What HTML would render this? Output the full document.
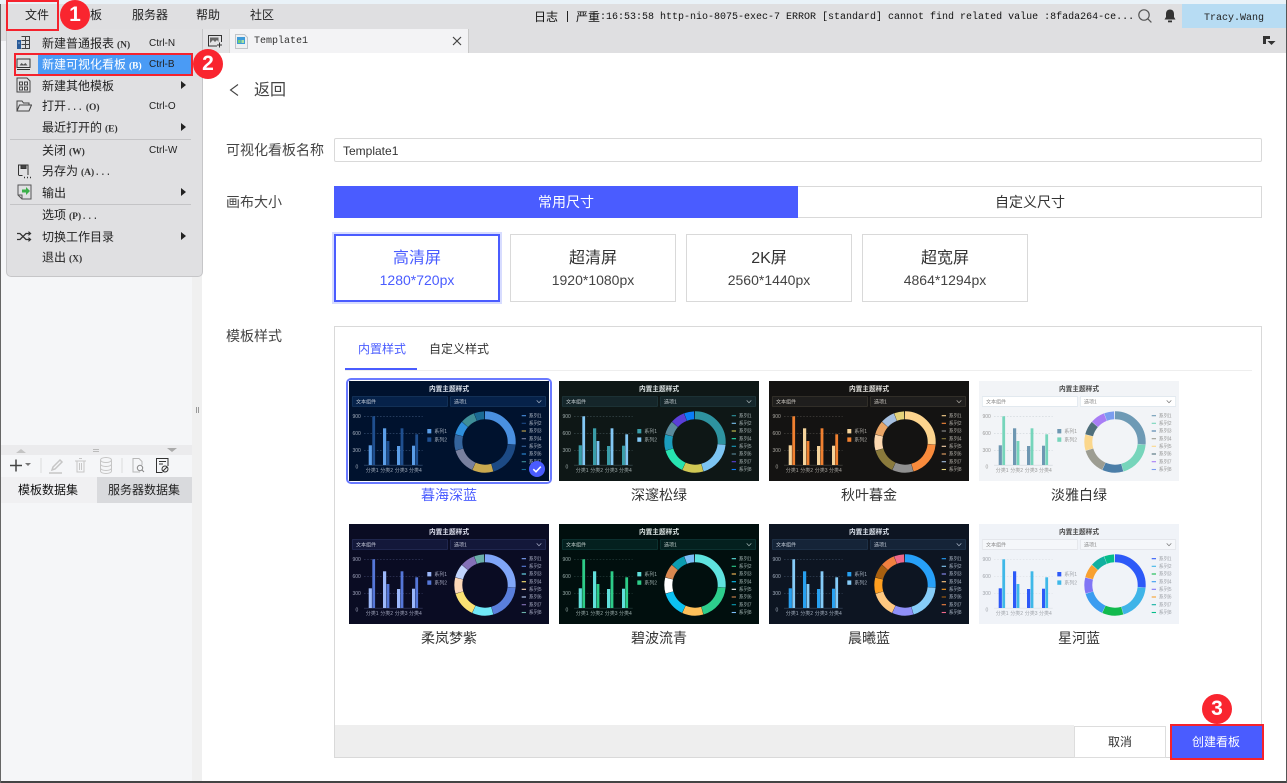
<!DOCTYPE html>
<html lang="zh-CN"><head><meta charset="utf-8"><title>新建可视化看板</title>
<style>
*{box-sizing:border-box}
html,body{margin:0;padding:0;width:1287px;height:783px;overflow:hidden;background:#fff}
body{position:relative;font-family:"Liberation Sans","Noto Sans CJK SC",sans-serif;color:#333;font-size:12px}
.a{position:absolute}
.t{position:absolute;white-space:nowrap;transform:translateY(-50%);line-height:1}
.c{transform:translate(-50%,-50%);text-align:center}
.m{font-family:"Liberation Mono","Noto Sans CJK SC",monospace;font-size:10px}
.k{font-family:"Liberation Serif",serif;font-size:9.5px;color:#333;margin-left:3px;font-weight:700}
.d{font-family:"Liberation Mono",monospace;font-size:10px;color:#333;letter-spacing:-.4px}
.mi{font-size:12px;color:#222;left:42px}
.ctl{font-size:10px;color:#222;left:149px}
.arr{position:absolute;left:181px;width:0;height:0;border-left:5px solid #222;border-top:4px solid transparent;border-bottom:4px solid transparent}
.sep{position:absolute;left:10px;width:181px;height:1px;background:#c4c4c6}
.red{position:absolute;border:2px solid #f5222d}
.num{position:absolute;width:30px;height:30px;border-radius:50%;background:#f9252f;color:#fff;font-size:21px;font-weight:700;line-height:30px;text-align:center}
.card{position:absolute;top:234px;width:166px;height:68px;border:1px solid #d9d9d9;background:#fff}
.card b{position:absolute;left:0;right:0;top:15px;text-align:center;font-weight:400;font-size:16px;line-height:18px;color:#333}
.card i{position:absolute;left:0;right:0;top:37px;text-align:center;font-style:normal;font-size:14px;line-height:16px;color:#444}
.th{position:absolute;width:200px;height:100px;display:block}
.tt{font-size:6.7px;text-anchor:middle;font-weight:700}
.s{font-size:5px}
.name{font-size:14px;color:#333}
</style></head><body>
<svg width="0" height="0" style="position:absolute"><defs>
<symbol id="c" viewBox="0 0 200 100" width="200" height="100">
<rect width="200" height="100" style="fill:var(--bg)"/>
<rect x="3.300" y="15.500" width="95.300" height="10" rx=".6" style="fill:var(--in);stroke:var(--bd)" stroke-width=".7"/>
<rect x="101.300" y="15.500" width="95.400" height="10" rx=".6" style="fill:var(--in);stroke:var(--bd)" stroke-width=".7"/>
<path d="M187.700 19.400l2.300 2.400 2.300-2.400" fill="none" style="stroke:var(--tx)" stroke-width=".7"/>
<g style="stroke:var(--gr)" stroke-width=".6" stroke-dasharray="1.600 1.600"><path d="M15 35.300H73.700M15 52.300H73.700M15 69.300H73.700"/></g>
<path d="M15 84.200H73.700" style="stroke:var(--gr)" stroke-width=".6"/>
<g style="fill:var(--a)"><rect x="19.700" y="64.300" width="3.200" height="19.700"/><rect x="34" y="47.300" width="3.200" height="36.700"/><rect x="48" y="65" width="3.200" height="19"/><rect x="63" y="64.700" width="3" height="19.300"/><rect x="78.300" y="48" width="4" height="4.400"/></g>
<g style="fill:var(--b)"><rect x="23.300" y="35.300" width="2.800" height="48.700"/><rect x="37.600" y="60" width="2.800" height="24"/><rect x="51.600" y="47.300" width="2.800" height="36.700"/><rect x="66.300" y="53.300" width="2.800" height="30.700"/><rect x="78.300" y="56.400" width="4" height="4.400"/></g>
<g fill="none" stroke-width="8" transform="rotate(-90 136 61)">
<circle cx="136" cy="61" r="26.700" pathLength="360" stroke-dasharray="95.400 360" stroke-dashoffset="0" style="stroke:var(--c1)"/>
<circle cx="136" cy="61" r="26.700" pathLength="360" stroke-dasharray="68.400 360" stroke-dashoffset="-96" style="stroke:var(--c2)"/>
<circle cx="136" cy="61" r="26.700" pathLength="360" stroke-dasharray="40.400 360" stroke-dashoffset="-165" style="stroke:var(--c3)"/>
<circle cx="136" cy="61" r="26.700" pathLength="360" stroke-dasharray="48.400 360" stroke-dashoffset="-206" style="stroke:var(--c4)"/>
<circle cx="136" cy="61" r="26.700" pathLength="360" stroke-dasharray="30.400 360" stroke-dashoffset="-255" style="stroke:var(--c5)"/>
<circle cx="136" cy="61" r="26.700" pathLength="360" stroke-dasharray="26.400 360" stroke-dashoffset="-286" style="stroke:var(--c6)"/>
<circle cx="136" cy="61" r="26.700" pathLength="360" stroke-dasharray="27.400 360" stroke-dashoffset="-313" style="stroke:var(--c7)"/>
<circle cx="136" cy="61" r="26.700" pathLength="360" stroke-dasharray="19 360" stroke-dashoffset="-341" style="stroke:var(--c8)"/>
</g>
<g stroke-width="1.100"><path d="M172.700 34.700h4.300" style="stroke:var(--c1)"/><path d="M172.700 42.300h4.300" style="stroke:var(--c2)"/><path d="M172.700 50h4.300" style="stroke:var(--c3)"/><path d="M172.700 57.700h4.300" style="stroke:var(--c4)"/><path d="M172.700 65.300h4.300" style="stroke:var(--c5)"/><path d="M172.700 73h4.300" style="stroke:var(--c6)"/><path d="M172.700 80.700h4.300" style="stroke:var(--c7)"/><path d="M172.700 88.500h4.300" style="stroke:var(--c8)"/></g>
</symbol>
</defs></svg>

<!-- window chrome -->
<div class="a" style="left:0;top:0;width:1287px;height:4px;background:#e9f2f8"></div>
<div class="a" style="left:0;top:4px;width:1287px;height:49px;background:#dfdfe1"></div>
<div class="a" style="left:0;top:41px;width:192px;height:740px;background:#f5f6f8"></div>
<div class="a" style="left:192px;top:41px;width:10px;height:740px;background:#f0f0f0"></div>
<div class="a" style="left:202px;top:29px;width:27px;height:24px;background:#e3e3e5"></div>
<div class="a" style="left:202px;top:29px;width:1px;height:24px;background:#c8c8c8"></div>
<div class="a" style="left:196px;top:407px;width:1px;height:6px;background:#999"></div>
<div class="a" style="left:198px;top:407px;width:1px;height:6px;background:#999"></div>

<!-- top menu -->
<span class="t c" style="left:37px;top:15px;color:#222">文件</span>
<span class="t" style="left:90px;top:15px;color:#222">板</span>
<span class="t" style="left:132px;top:15px;color:#222">服务器</span>
<span class="t" style="left:196px;top:15px;color:#222">帮助</span>
<span class="t" style="left:250px;top:15px;color:#222">社区</span>
<span class="t" style="left:534px;top:17px;color:#111">日志</span>
<div class="a" style="left:567px;top:11px;width:1px;height:11px;background:#222"></div>
<span class="t" style="left:576px;top:17px;color:#111">严重</span>
<span class="t m" style="left:600px;top:18px;color:#111">:16:53:58 http-nio-8075-exec-7 ERROR [standard] cannot find related value :8fada264-ce...</span>
<svg class="a" style="left:1137px;top:8px" width="16" height="16" viewBox="0 0 16 16" fill="none" stroke="#555" stroke-width="1.200"><circle cx="7" cy="7" r="5.200"/><path d="M10.800 10.800l3.600 3.600"/></svg>
<svg class="a" style="left:1163px;top:8px" width="14" height="16" viewBox="0 0 14 16"><path d="M7 1.500c2.800 0 4 2 4 4.500v3l1.500 2.500h-11L3 9V6c0-2.500 1.200-4.500 4-4.500z" fill="#333"/><rect x="5" y="12.500" width="4" height="1.800" fill="#333"/></svg>
<div class="a" style="left:1182px;top:4px;width:105px;height:24px;background:#b7dcf3"></div>
<span class="t c m" style="left:1234px;top:19px;color:#222">Tracy.Wang</span>

<!-- tab row -->
<svg class="a" style="left:207px;top:33px" width="16" height="16" viewBox="0 0 16 16" fill="none" stroke="#333"><path d="M10 13H1.500V2.500h13V9"/><path d="M3 10l3-3 2 2 2-2 1.500 2V4.500H3z" fill="#666" stroke="none"/><path d="M12.500 9.500v5M10 12h5"/></svg>
<div class="a" style="left:229px;top:29px;width:240px;height:24px;background:#f3f3f5;border-right:1px solid #c8c8c8;border-left:1px solid #d6d6d6"></div>
<svg class="a" style="left:235px;top:34px" width="13" height="15" viewBox="0 0 13 15"><path d="M.5.500h9l3 3v11H.5z" fill="#eef0f2" stroke="#c0c4c8"/><rect x="2" y="3" width="8" height="7" fill="#3f9bd8"/><rect x="3" y="6" width="2.500" height="3" fill="#7bd06f"/><rect x="6.500" y="6" width="2.500" height="3" fill="#a9e29f"/></svg>
<span class="t m" style="left:254px;top:42px;color:#333">Template1</span>
<svg class="a" style="left:452px;top:36px" width="10" height="10" viewBox="0 0 10 10" stroke="#444" stroke-width="1.200"><path d="M1 1l8 8M9 1l-8 8"/></svg>
<svg class="a" style="left:1262px;top:36px" width="14" height="10" viewBox="0 0 14 10"><path d="M1 0h7v3H4v5H1z" fill="#333"/><path d="M5.500 5h8l-4 4z" fill="#333"/></svg>

<!-- left bottom panel -->
<div class="a" style="left:0;top:445px;width:192px;height:10px;background:#ebebed"></div>
<div class="a" style="left:16px;top:449px;border-left:5px solid transparent;border-right:5px solid transparent;border-bottom:4px solid #c4c4c4"></div>
<div class="a" style="left:167px;top:448px;border-left:5px solid transparent;border-right:5px solid transparent;border-top:4px solid #aaa"></div>
<div class="a" style="left:93px;top:449px;width:6px;height:1px;background:#bbb"></div>
<div class="a" style="left:93px;top:451px;width:6px;height:1px;background:#bbb"></div>
<svg class="a" style="left:0;top:455px" width="192" height="22" viewBox="0 0 192 22" fill="none">
<path d="M10 10.500h12M16 4.500v12" stroke="#444" stroke-width="1.500"/><path d="M25 8h6l-3 3z" fill="#777"/>
<path d="M41 3v15M122 3v15" stroke="#dcdcdc"/>
<path d="M52 15l1-3 7-7 2 2-7 7zM49 18h13" stroke="#c6c6c6" stroke-width="1.500"/>
<path d="M75 6h11M77 6v11h7V6M79 3.500h3M79.500 8v7M81.500 8v7" stroke="#c6c6c6"/>
<ellipse cx="106" cy="5" rx="5.500" ry="2.500" stroke="#c6c6c6"/><path d="M100.500 5v11c0 1.500 2.500 2.500 5.500 2.500s5.500-1 5.500-2.500V5M100.500 9c0 1.500 2.500 2.500 5.500 2.500s5.500-1 5.500-2.500M100.500 13c0 1.500 2.500 2.500 5.500 2.500s5.500-1 5.500-2.500" stroke="#c6c6c6"/>
<path d="M140 17h-7V3.500h6l3 3V10" stroke="#b8b8b8"/><circle cx="140" cy="13" r="2.700" stroke="#888"/><path d="M142 15l2 2" stroke="#888"/>
<path d="M168 11V3.500H156.500V17.500h6" stroke="#333"/><path d="M159 6.500h7M159 9h4" stroke="#333"/><circle cx="165" cy="14" r="3" stroke="#333"/><path d="M163 16l4-4" stroke="#333"/>
</svg>
<div class="a" style="left:0;top:477px;width:97px;height:26px;background:#f0f0f2"></div>
<div class="a" style="left:97px;top:477px;width:95px;height:26px;background:#d9dadd"></div>
<span class="t" style="left:18px;top:490px;color:#111">模板数据集</span>
<span class="t" style="left:108px;top:490px;color:#222">服务器数据集</span>

<!-- main -->
<svg class="a" style="left:228px;top:83px" width="12" height="14" viewBox="0 0 12 14" fill="none" stroke="#444" stroke-width="1.100"><path d="M10 1.500L2.500 7l7.500 5.500"/></svg>
<span class="t" style="left:254px;top:91px;font-size:16px;color:#444">返回</span>
<span class="t" style="left:226px;top:150px;font-size:14px;color:#444">可视化看板名称</span>
<div class="a" style="left:334px;top:138px;width:928px;height:24px;border:1px solid #d9d9d9;border-radius:2px"></div>
<span class="t" style="left:343px;top:151px;font-size:12px;color:#333">Template1</span>
<span class="t" style="left:226px;top:202px;font-size:14px;color:#444">画布大小</span>
<div class="a" style="left:334px;top:186px;width:464px;height:32px;background:#4a5cff"></div>
<div class="a" style="left:798px;top:186px;width:464px;height:32px;border:1px solid #d9d9d9;border-left:0"></div>
<span class="t c" style="left:566px;top:202px;font-size:14px;color:#fff">常用尺寸</span>
<span class="t c" style="left:1030px;top:202px;font-size:14px;color:#333">自定义尺寸</span>

<div class="card" style="left:334px;border:2px solid #4a5cff;box-shadow:0 0 0 2px #d7dcff"><b style="top:14px;color:#4a5cff">高清屏</b><i style="top:36px;color:#4a5cff">1280*720px</i></div>
<div class="card" style="left:510px"><b>超清屏</b><i>1920*1080px</i></div>
<div class="card" style="left:686px"><b>2K屏</b><i>2560*1440px</i></div>
<div class="card" style="left:862px"><b>超宽屏</b><i>4864*1294px</i></div>

<span class="t" style="left:226px;top:336px;font-size:14px;color:#444">模板样式</span>
<div class="a" style="left:334px;top:326px;width:928px;height:432px;border:1px solid #d9d9d9"></div>
<span class="t" style="left:358px;top:349px;color:#4a5cff">内置样式</span>
<span class="t" style="left:429px;top:349px;color:#333">自定义样式</span>
<div class="a" style="left:345px;top:370px;width:907px;height:1px;background:#eee"></div>
<div class="a" style="left:345px;top:368px;width:72px;height:2px;background:#4a5cff"></div>
<div class="a" style="left:346px;top:378px;width:206px;height:106px;border:2px solid #6a7aff;border-radius:5px"></div>

<svg class="th" style="left:349px;top:381px;--bg:#00122e;--in:#06224a;--bd:#17385f;--tx:#a8b4c6;--gr:#3a5478;--a:#5b9ee8;--b:#1f4f8f;--c1:#4a90e0;--c2:#1c4a85;--c3:#c9a94f;--c4:#78809f;--c5:#34649c;--c6:#2e8fdc;--c7:#3e8e98;--c8:#1a6a94" viewBox="0 0 200 100"><use href="#c"/><text x="100" y="10" class="tt" fill="#dfe6f0">内置主题样式</text><text class="s" fill="#a3aebd"><tspan x="7" y="22.500" fill="#c4ccd8">文本组件</tspan><tspan x="105" y="22.500" fill="#c4ccd8">选项1</tspan><tspan x="3.500" y="37">900</tspan><tspan x="3.500" y="54">600</tspan><tspan x="3.500" y="71">300</tspan><tspan x="6.500" y="87.500">0</tspan><tspan x="16.700" y="90.800">分类1</tspan><tspan x="31.300" y="90.800">分类2</tspan><tspan x="45.700" y="90.800">分类3</tspan><tspan x="60" y="90.800">分类4</tspan><tspan x="85.300" y="52">系列1</tspan><tspan x="85.300" y="60.300">系列2</tspan><tspan x="179.700" y="36.500">系列1</tspan><tspan x="179.700" y="44">系列2</tspan><tspan x="179.700" y="51.700">系列3</tspan><tspan x="179.700" y="59.400">系列4</tspan><tspan x="179.700" y="67">系列5</tspan><tspan x="179.700" y="74.700">系列6</tspan><tspan x="179.700" y="82.400">系列7</tspan><tspan x="179.700" y="90.200">系列8</tspan></text></svg>

<svg class="th" style="left:559px;top:381px;--bg:#0e1716;--in:#15262a;--bd:#20383c;--tx:#a8b4b6;--gr:#3e5054;--a:#3a9da8;--b:#83c8f5;--c1:#2e93a0;--c2:#7cc4f2;--c3:#cfc854;--c4:#27e3b0;--c5:#1b9cbd;--c6:#5a8a9c;--c7:#5b3fd8;--c8:#0a7cf8" viewBox="0 0 200 100"><use href="#c"/><text x="100" y="10" class="tt" fill="#dfe6e6">内置主题样式</text><text class="s" fill="#a0acac"><tspan x="7" y="22.500" fill="#c4ccd0">文本组件</tspan><tspan x="105" y="22.500" fill="#c4ccd0">选项1</tspan><tspan x="3.500" y="37">900</tspan><tspan x="3.500" y="54">600</tspan><tspan x="3.500" y="71">300</tspan><tspan x="6.500" y="87.500">0</tspan><tspan x="16.700" y="90.800">分类1</tspan><tspan x="31.300" y="90.800">分类2</tspan><tspan x="45.700" y="90.800">分类3</tspan><tspan x="60" y="90.800">分类4</tspan><tspan x="85.300" y="52">系列1</tspan><tspan x="85.300" y="60.300">系列2</tspan><tspan x="179.700" y="36.500">系列1</tspan><tspan x="179.700" y="44">系列2</tspan><tspan x="179.700" y="51.700">系列3</tspan><tspan x="179.700" y="59.400">系列4</tspan><tspan x="179.700" y="67">系列5</tspan><tspan x="179.700" y="74.700">系列6</tspan><tspan x="179.700" y="82.400">系列7</tspan><tspan x="179.700" y="90.200">系列8</tspan></text></svg>

<svg class="th" style="left:769px;top:381px;--bg:#141312;--in:#1f1e1d;--bd:#3a362e;--tx:#b0aca4;--gr:#4a4844;--a:#f5d49c;--b:#f08030;--c1:#fcd48e;--c2:#f98b3c;--c3:#909090;--c4:#8a7a3c;--c5:#fcd8b0;--c6:#e9a566;--c7:#a6c0e0;--c8:#e4d27a" viewBox="0 0 200 100"><use href="#c"/><text x="100" y="10" class="tt" fill="#e6e4e0">内置主题样式</text><text class="s" fill="#aba8a2"><tspan x="7" y="22.500" fill="#ccc8c2">文本组件</tspan><tspan x="105" y="22.500" fill="#ccc8c2">选项1</tspan><tspan x="3.500" y="37">900</tspan><tspan x="3.500" y="54">600</tspan><tspan x="3.500" y="71">300</tspan><tspan x="6.500" y="87.500">0</tspan><tspan x="16.700" y="90.800">分类1</tspan><tspan x="31.300" y="90.800">分类2</tspan><tspan x="45.700" y="90.800">分类3</tspan><tspan x="60" y="90.800">分类4</tspan><tspan x="85.300" y="52">系列1</tspan><tspan x="85.300" y="60.300">系列2</tspan><tspan x="179.700" y="36.500">系列1</tspan><tspan x="179.700" y="44">系列2</tspan><tspan x="179.700" y="51.700">系列3</tspan><tspan x="179.700" y="59.400">系列4</tspan><tspan x="179.700" y="67">系列5</tspan><tspan x="179.700" y="74.700">系列6</tspan><tspan x="179.700" y="82.400">系列7</tspan><tspan x="179.700" y="90.200">系列8</tspan></text></svg>

<svg class="th" style="left:979px;top:381px;--bg:#f2f4f7;--in:#ffffff;--bd:#dbe4ec;--tx:#777;--gr:#cdd3d9;--a:#6e97b2;--b:#76d5bb;--c1:#6e9ab5;--c2:#77d5bb;--c3:#4c7ea8;--c4:#9d9d92;--c5:#fbd78c;--c6:#4f6f7c;--c7:#a87df5;--c8:#7b9df0" viewBox="0 0 200 100"><use href="#c"/><text x="100" y="10" class="tt" fill="#444">内置主题样式</text><text class="s" fill="#999"><tspan x="7" y="22.500" fill="#888">文本组件</tspan><tspan x="105" y="22.500" fill="#888">选项1</tspan><tspan x="3.500" y="37">900</tspan><tspan x="3.500" y="54">600</tspan><tspan x="3.500" y="71">300</tspan><tspan x="6.500" y="87.500">0</tspan><tspan x="16.700" y="90.800">分类1</tspan><tspan x="31.300" y="90.800">分类2</tspan><tspan x="45.700" y="90.800">分类3</tspan><tspan x="60" y="90.800">分类4</tspan><tspan x="85.300" y="52">系列1</tspan><tspan x="85.300" y="60.300">系列2</tspan><tspan x="179.700" y="36.500">系列1</tspan><tspan x="179.700" y="44">系列2</tspan><tspan x="179.700" y="51.700">系列3</tspan><tspan x="179.700" y="59.400">系列4</tspan><tspan x="179.700" y="67">系列5</tspan><tspan x="179.700" y="74.700">系列6</tspan><tspan x="179.700" y="82.400">系列7</tspan><tspan x="179.700" y="90.200">系列8</tspan></text></svg>

<svg class="th" style="left:349px;top:524px;--bg:#0a0c23;--in:#13183a;--bd:#262e58;--tx:#a8aec8;--gr:#3a4066;--a:#9cb8fa;--b:#5577d8;--c1:#80a6f8;--c2:#5a7fdc;--c3:#70e8f8;--c4:#fbe273;--c5:#fcd8b8;--c6:#c0d4fc;--c7:#8471b8;--c8:#6bb0a8" viewBox="0 0 200 100"><use href="#c"/><text x="100" y="10" class="tt" fill="#e0e2f0">内置主题样式</text><text class="s" fill="#a0a4bb"><tspan x="7" y="22.500" fill="#c4c8d8">文本组件</tspan><tspan x="105" y="22.500" fill="#c4c8d8">选项1</tspan><tspan x="3.500" y="37">900</tspan><tspan x="3.500" y="54">600</tspan><tspan x="3.500" y="71">300</tspan><tspan x="6.500" y="87.500">0</tspan><tspan x="16.700" y="90.800">分类1</tspan><tspan x="31.300" y="90.800">分类2</tspan><tspan x="45.700" y="90.800">分类3</tspan><tspan x="60" y="90.800">分类4</tspan><tspan x="85.300" y="52">系列1</tspan><tspan x="85.300" y="60.300">系列2</tspan><tspan x="179.700" y="36.500">系列1</tspan><tspan x="179.700" y="44">系列2</tspan><tspan x="179.700" y="51.700">系列3</tspan><tspan x="179.700" y="59.400">系列4</tspan><tspan x="179.700" y="67">系列5</tspan><tspan x="179.700" y="74.700">系列6</tspan><tspan x="179.700" y="82.400">系列7</tspan><tspan x="179.700" y="90.200">系列8</tspan></text></svg>

<svg class="th" style="left:559px;top:524px;--bg:#010f0e;--in:#04201f;--bd:#0f3a38;--tx:#a0b4b2;--gr:#284240;--a:#60e0dc;--b:#2dcc88;--c1:#5fe3df;--c2:#2dce8c;--c3:#ffc05a;--c4:#0cc0f0;--c5:#ffffff;--c6:#d88850;--c7:#0b9cb0;--c8:#7cbdf8" viewBox="0 0 200 100"><use href="#c"/><text x="100" y="10" class="tt" fill="#dfe8e6">内置主题样式</text><text class="s" fill="#9aacaa"><tspan x="7" y="22.500" fill="#c0ccca">文本组件</tspan><tspan x="105" y="22.500" fill="#c0ccca">选项1</tspan><tspan x="3.500" y="37">900</tspan><tspan x="3.500" y="54">600</tspan><tspan x="3.500" y="71">300</tspan><tspan x="6.500" y="87.500">0</tspan><tspan x="16.700" y="90.800">分类1</tspan><tspan x="31.300" y="90.800">分类2</tspan><tspan x="45.700" y="90.800">分类3</tspan><tspan x="60" y="90.800">分类4</tspan><tspan x="85.300" y="52">系列1</tspan><tspan x="85.300" y="60.300">系列2</tspan><tspan x="179.700" y="36.500">系列1</tspan><tspan x="179.700" y="44">系列2</tspan><tspan x="179.700" y="51.700">系列3</tspan><tspan x="179.700" y="59.400">系列4</tspan><tspan x="179.700" y="67">系列5</tspan><tspan x="179.700" y="74.700">系列6</tspan><tspan x="179.700" y="82.400">系列7</tspan><tspan x="179.700" y="90.200">系列8</tspan></text></svg>

<svg class="th" style="left:769px;top:524px;--bg:#0d1522;--in:#152438;--bd:#22364e;--tx:#a8b4c6;--gr:#3a4a60;--a:#27a0f0;--b:#86ccf8;--c1:#27a0f8;--c2:#86ccf8;--c3:#8f90f8;--c4:#ffc880;--c5:#ff9f20;--c6:#a86010;--c7:#f08040;--c8:#f0688a" viewBox="0 0 200 100"><use href="#c"/><text x="100" y="10" class="tt" fill="#dfe6f0">内置主题样式</text><text class="s" fill="#a3aebd"><tspan x="7" y="22.500" fill="#c4ccd8">文本组件</tspan><tspan x="105" y="22.500" fill="#c4ccd8">选项1</tspan><tspan x="3.500" y="37">900</tspan><tspan x="3.500" y="54">600</tspan><tspan x="3.500" y="71">300</tspan><tspan x="6.500" y="87.500">0</tspan><tspan x="16.700" y="90.800">分类1</tspan><tspan x="31.300" y="90.800">分类2</tspan><tspan x="45.700" y="90.800">分类3</tspan><tspan x="60" y="90.800">分类4</tspan><tspan x="85.300" y="52">系列1</tspan><tspan x="85.300" y="60.300">系列2</tspan><tspan x="179.700" y="36.500">系列1</tspan><tspan x="179.700" y="44">系列2</tspan><tspan x="179.700" y="51.700">系列3</tspan><tspan x="179.700" y="59.400">系列4</tspan><tspan x="179.700" y="67">系列5</tspan><tspan x="179.700" y="74.700">系列6</tspan><tspan x="179.700" y="82.400">系列7</tspan><tspan x="179.700" y="90.200">系列8</tspan></text></svg>

<svg class="th" style="left:979px;top:524px;--bg:#f0f3f8;--in:#f5f7fa;--bd:#dfe2e6;--tx:#777;--gr:#dde0e5;--a:#2d59f8;--b:#3fb8e8;--c1:#2d59f8;--c2:#3fb4e8;--c3:#12ba4e;--c4:#3b9cf0;--c5:#8075f5;--c6:#f8a030;--c7:#10b0a0;--c8:#05bd8a" viewBox="0 0 200 100"><use href="#c"/><text x="100" y="10" class="tt" fill="#444">内置主题样式</text><text class="s" fill="#a0a4aa"><tspan x="7" y="22.500" fill="#888">文本组件</tspan><tspan x="105" y="22.500" fill="#888">选项1</tspan><tspan x="3.500" y="37">900</tspan><tspan x="3.500" y="54">600</tspan><tspan x="3.500" y="71">300</tspan><tspan x="6.500" y="87.500">0</tspan><tspan x="16.700" y="90.800">分类1</tspan><tspan x="31.300" y="90.800">分类2</tspan><tspan x="45.700" y="90.800">分类3</tspan><tspan x="60" y="90.800">分类4</tspan><tspan x="85.300" y="52">系列1</tspan><tspan x="85.300" y="60.300">系列2</tspan><tspan x="179.700" y="36.500">系列1</tspan><tspan x="179.700" y="44">系列2</tspan><tspan x="179.700" y="51.700">系列3</tspan><tspan x="179.700" y="59.400">系列4</tspan><tspan x="179.700" y="67">系列5</tspan><tspan x="179.700" y="74.700">系列6</tspan><tspan x="179.700" y="82.400">系列7</tspan><tspan x="179.700" y="90.200">系列8</tspan></text></svg>

<svg class="a" style="left:529px;top:461px" width="16" height="16" viewBox="0 0 16 16"><circle cx="8" cy="8" r="8" fill="#4a5cff"/><path d="M4.300 8.200l2.700 2.600 4.800-5.200" fill="none" stroke="#fff" stroke-width="1.500"/></svg>

<span class="t c name" style="left:449px;top:495px;color:#4a5cff">暮海深蓝</span>
<span class="t c name" style="left:659px;top:495px">深邃松绿</span>
<span class="t c name" style="left:869px;top:495px">秋叶暮金</span>
<span class="t c name" style="left:1079px;top:495px">淡雅白绿</span>
<span class="t c name" style="left:449px;top:638px">柔岚梦紫</span>
<span class="t c name" style="left:659px;top:638px">碧波流青</span>
<span class="t c name" style="left:869px;top:638px">晨曦蓝</span>
<span class="t c name" style="left:1079px;top:638px">星河蓝</span>

<!-- footer -->
<div class="a" style="left:335px;top:725px;width:739px;height:32px;background:#eeeeee"></div>
<div class="a" style="left:1074px;top:726px;width:92px;height:32px;background:#fff;border:1px solid #ddd"></div>
<span class="t c" style="left:1120px;top:742px;color:#333">取消</span>
<div class="a" style="left:1170px;top:724px;width:94px;height:36px;background:#4a5cff;border:2px solid #f5222d"></div>
<span class="t c" style="left:1216px;top:742px;color:#fff">创建看板</span>

<!-- file menu -->
<div class="a" style="left:6px;top:29px;width:197px;height:248px;background:#e0e0e2;border:1px solid #c6c6c8;border-top:0;border-radius:0 0 5px 5px"></div>
<div class="a" style="left:38px;top:55px;width:153px;height:19px;background:#4a9bf5"></div>
<span class="t mi" style="top:44px">新建普通报表<span class="k">(N)</span></span>
<span class="t mi" style="top:65px;color:#fff">新建可视化看板<span class="k" style="color:#fff">(B)</span></span>
<span class="t mi" style="top:86px">新建其他模板</span>
<span class="t mi" style="top:107px">打开<span class="d">...</span><span class="k">(O)</span></span>
<span class="t mi" style="top:128px">最近打开的<span class="k">(E)</span></span>
<span class="t mi" style="top:151px">关闭<span class="k">(W)</span></span>
<span class="t mi" style="top:172px">另存为<span class="k">(A)</span><span class="d">...</span></span>
<span class="t mi" style="top:193px">输出</span>
<span class="t mi" style="top:216px">选项<span class="k">(P)</span><span class="d">...</span></span>
<span class="t mi" style="top:237px">切换工作目录</span>
<span class="t mi" style="top:258px">退出<span class="k">(X)</span></span>
<span class="t ctl" style="top:44px">Ctrl-N</span>
<span class="t ctl" style="top:65px">Ctrl-B</span>
<span class="t ctl" style="top:107px">Ctrl-O</span>
<span class="t ctl" style="top:151px">Ctrl-W</span>
<div class="arr" style="top:81px"></div><div class="arr" style="top:123px"></div><div class="arr" style="top:188px"></div><div class="arr" style="top:232px"></div>
<div class="sep" style="top:139px"></div><div class="sep" style="top:204px"></div>
<svg class="a" style="left:16px;top:35px" width="15" height="15" viewBox="0 0 15 15" fill="none" stroke="#444"><path d="M5.500 1.500h8v12h-8M5.500 5.500h8M5.500 9.500h8M9.500 1.500v12"/><path d="M1 14V5h4v9" fill="#2a5c9a" stroke="none"/><path d="M2.500 8h1" stroke="#fff"/></svg>
<svg class="a" style="left:16px;top:57px" width="15" height="14" viewBox="0 0 15 14" fill="none" stroke="#333"><rect x="1" y="2" width="13" height="8.500"/><path d="M1 12.500h13"/><path d="M3.500 8.500l2-2.500 2 1.500 2-1.500 2 2.500z" fill="#555" stroke="none"/></svg>
<svg class="a" style="left:16px;top:77px" width="15" height="16" viewBox="0 0 15 16" fill="none" stroke="#444"><path d="M1 1h10l3 3v11H1z"/><rect x="3.500" y="5" width="3" height="3"/><rect x="8.500" y="5" width="3" height="3"/><rect x="3.500" y="10" width="3" height="3"/><rect x="8.500" y="10" width="3" height="3"/></svg>
<svg class="a" style="left:16px;top:99px" width="16" height="13" viewBox="0 0 16 13" fill="none" stroke="#444"><path d="M1 12V2h5l1.500 2H13v2M1 12l2.500-6H15.500L13 12z"/></svg>
<svg class="a" style="left:17px;top:164px" width="15" height="15" viewBox="0 0 15 15" fill="none" stroke="#333"><path d="M1.500 11V1h9.500v10"/><path d="M1.500 11.500h4"/><rect x="4" y="1" width="5" height="3.500" fill="#444"/><path d="M7 13.500h1M10 13.500h1M13 13.500h1" stroke-width="1.500"/></svg>
<svg class="a" style="left:17px;top:184px" width="15" height="16" viewBox="0 0 15 16" fill="none" stroke="#555"><path d="M1 1h13v14H5l-4-4z"/><path d="M1 11h4v4"/><path d="M5 5.500h4V3l4 4-4 4V8.500H5z" fill="#3cb04a" stroke="none"/></svg>
<svg class="a" style="left:17px;top:231px" width="15" height="11" viewBox="0 0 15 11" fill="none" stroke="#333" stroke-width="1.300"><path d="M0 2.500h3l6 6h3M0 8.500h3l6-6h3"/><path d="M11.500 0l3 2.500-3 2.500zM11.500 6l3 2.500-3 2.500z" fill="#333" stroke="none"/></svg>

<!-- annotations -->
<div class="red" style="left:6px;top:0;width:53px;height:31px"></div>
<div class="red" style="left:14px;top:53px;width:179px;height:23px"></div>
<div class="num" style="left:60px;top:0">1</div>
<div class="num" style="left:193px;top:49px">2</div>
<div class="num" style="left:1202px;top:694px">3</div>

<!-- edges -->
<div class="a" style="left:0;top:781px;width:1287px;height:2px;background:#444"></div>
<div class="a" style="left:1286px;top:0;width:1px;height:783px;background:#555"></div>
<div class="a" style="left:0;top:4px;width:1px;height:779px;background:#666"></div>
</body></html>
